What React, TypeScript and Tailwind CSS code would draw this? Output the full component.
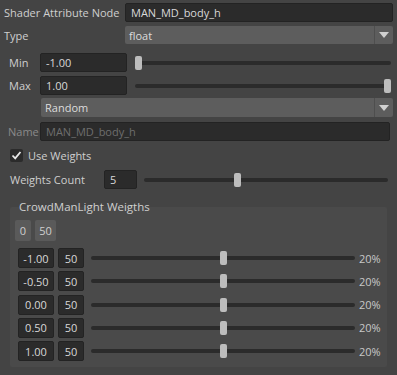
import React from "react";

const font = { fontFamily: '"Open Sans", "DejaVu Sans", sans-serif' };

function Field({ value, className = "", dim = false }: { value: string; className?: string; dim?: boolean }) {
  return (
    <div
      className={`h-[19px] bg-[#2b2b2b] border border-[#232323] rounded-[2px] flex items-center px-[5px] leading-none whitespace-nowrap ${dim ? "text-[#6e6e6e]" : "text-[#d8d8d8]"} ${className}`}
    >
      {value}
    </div>
  );
}

function Slider({ pos, className = "" }: { pos: number; className?: string }) {
  return (
    <div className={`relative h-[14px] flex items-center ${className}`}>
      <div className="h-[4px] w-full bg-[#2b2b2b] rounded-full" />
      <div
        className="absolute top-0 w-[7px] h-[14px] bg-[#bdbdbd] rounded-[2px]"
        style={{ left: `calc(${pos}% - ${(pos / 100) * 7}px)` }}
      />
    </div>
  );
}

function Dropdown({ value, className = "" }: { value: string; className?: string }) {
  return (
    <div className={`h-full bg-[#5d5d5d] rounded-[2px] flex items-center leading-none text-[#dcdcdc] ${className}`}>
      <div className="flex-1 pl-[4px]">{value}</div>
      <div className="w-[1px] h-full bg-[#4e4e4e]" />
      <div className="w-[18px] h-full flex items-center justify-center">
        <svg width="10" height="6" viewBox="0 0 10 6">
          <path d="M0 0 L10 0 L5 6 Z" fill="#d0d0d0" />
        </svg>
      </div>
    </div>
  );
}

function WeightRow({ v }: { v: string }) {
  return (
    <div className="flex items-center h-[20px]">
      <Field value={v} className="w-[36px] h-[20px] justify-center px-0 ml-[8px]" />
      <Field value="50" className="w-[26px] h-[20px] justify-center px-0 ml-[4px]" />
      <Slider pos={50} className="w-[264px] ml-[7px]" />
      <div className="ml-[4px] leading-none text-[#c8c8c8]">20%</div>
    </div>
  );
}

export default function App() {
  return (
    <div className="flex flex-col w-[397px] h-[375px] bg-[#444444] overflow-hidden text-[#cfcfcf] text-[11px] leading-none whitespace-nowrap" style={font}>
      <div className="flex items-center h-[19px] mt-[3px] pr-[4px]">
        <div className="w-[125px] pl-[4px]">Shader Attribute Node</div>
        <Field value="MAN_MD_body_h" className="flex-1" />
      </div>
      <div className="flex items-center h-[18px] mt-[4px] pr-[4px]">
        <div className="w-[125px] pl-[4px]">Type</div>
        <Dropdown value="float" className="flex-1" />
      </div>
      <div className="flex items-center h-[19px] mt-[9px] pr-[6px]">
        <div className="w-[40px] pl-[9px]">Min</div>
        <Field value="-1.00" className="w-[87px]" />
        <Slider pos={0} className="flex-1 ml-[8px]" />
      </div>
      <div className="flex items-center h-[19px] mt-[4px] pr-[6px]">
        <div className="w-[40px] pl-[9px]">Max</div>
        <Field value="1.00" className="w-[87px]" />
        <Slider pos={100} className="flex-1 ml-[8px]" />
      </div>
      <div className="flex items-center h-[19px] mt-[3px] pr-[4px] pl-[41px]">
        <Dropdown value="Random" className="flex-1" />
      </div>
      <div className="flex items-center h-[19px] mt-[5px] pr-[7px]">
        <div className="w-[40px] pl-[8px] text-[#8a8a8a]">Name</div>
        <Field value="MAN_MD_body_h" dim className="flex-1" />
      </div>
      <div className="flex items-center h-[13px] mt-[8px] pl-[10px]">
        <div className="w-[13px] h-[13px] bg-[#2b2b2b] rounded-[2px] flex items-center justify-center">
          <svg width="11" height="11" viewBox="0 0 11 11">
            <path d="M1.5 5.5 L4.2 8.3 L9.5 2" stroke="#e8e8e8" strokeWidth="1.8" fill="none" />
          </svg>
        </div>
        <div className="ml-[5px]">Use Weights</div>
      </div>
      <div className="flex items-center h-[19px] mt-[8px] pl-[10px] pr-[9px]">
        <div className="w-[94px]">Weights Count</div>
        <Field value="5" className="w-[33px]" />
        <Slider pos={38} className="flex-1 ml-[7px]" />
      </div>
      <div className="flex flex-col mt-[18px] ml-[10px] w-[377px] h-[160px] bg-[#4a4a4a] rounded-[2px] shrink-0">
        <div className="-mt-[8px] ml-[9px] leading-[16px] w-fit text-[11.5px]">CrowdManLight Weigths</div>
        <div className="flex mt-[5px] ml-[5px] gap-[4px]">
          <div className="w-[16px] h-[21px] bg-[#5a5a5a] rounded-[2px] flex items-center justify-center">0</div>
          <div className="w-[21px] h-[21px] bg-[#5a5a5a] rounded-[2px] flex items-center justify-center">50</div>
        </div>
        <div className="flex flex-col gap-[3.25px] mt-[7px]">
          <WeightRow v="-1.00" />
          <WeightRow v="-0.50" />
          <WeightRow v="0.00" />
          <WeightRow v="0.50" />
          <WeightRow v="1.00" />
        </div>
      </div>
    </div>
  );
}
